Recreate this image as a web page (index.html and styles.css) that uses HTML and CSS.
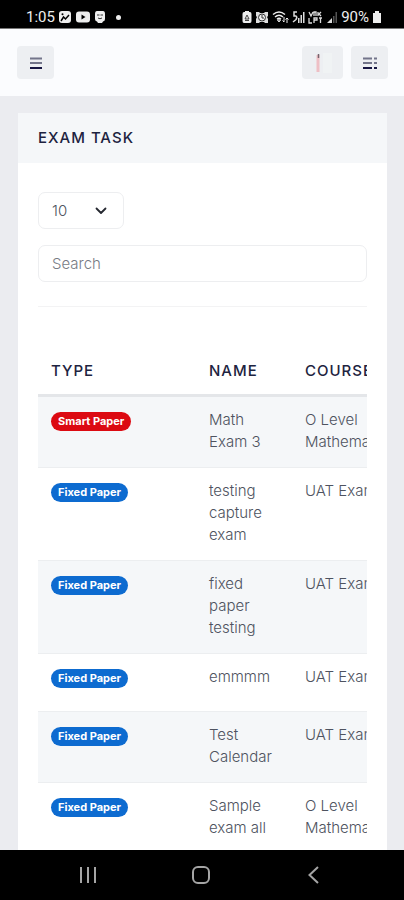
FILE: index.html
```html
<!DOCTYPE html>
<html lang="en">
<head>
<meta charset="utf-8">
<meta name="viewport" content="width=device-width, initial-scale=1">
<title>Exam Task</title>
<link rel="stylesheet" href="styles.css">
</head>
<body>
<div class="status">
  <div class="status-group">
    <span class="clock">1:05</span>
    <svg width="14" height="14" viewBox="0 0 14 14"><rect x="1" y="1" width="12" height="12" rx="3" fill="#eee"/><path d="M3 11l2.500-4 2 2 3.500-4" fill="none" stroke="#000" stroke-width="1.500"/><circle cx="4.500" cy="4.300" r="1" fill="#000"/></svg>
    <svg width="16" height="14" viewBox="0 0 16 14"><rect x="1" y="1.500" width="14" height="11" rx="3" fill="#eee"/><path d="M6.500 4.500v5l4-2.500z" fill="#000"/></svg>
    <svg width="12" height="14" viewBox="0 0 12 14"><path d="M3 1h6q2 0 2 3v5q0 2-2 2.500L8 13H4l-1-1.500Q1 11 1 9V4q0-3 2-3z" fill="#eee"/><path d="M3 5h2.500M6.500 5H9M4 8q2 1.500 4 0" fill="none" stroke="#333"/></svg>
    <span class="dot"></span>
  </div>
  <div class="status-group">
    <svg width="10" height="14" viewBox="0 0 10 14"><path d="M3 1h4v1h1q1.500 0 1.500 2v7q0 2-1.500 2H2q-1.500 0-1.500-2V4q0-2 1.500-2h1z" fill="#eee"/><path d="M3 9l2-4 2 4zM3 10.500h4" fill="none" stroke="#444"/></svg>
    <svg width="14" height="14" viewBox="0 0 14 14"><path d="M1 2h3l1 1h4l1-1h3v4l-1 1 1 2v4h-3l-1-1H5l-1 1H1V9l1-2-1-1z" fill="#ddd"/><circle cx="7" cy="7.500" r="3.500" fill="#eee" stroke="#333"/><path d="M7 5v3h2" fill="none" stroke="#333"/></svg>
    <svg width="17" height="14" viewBox="0 0 17 14"><path d="M1 4.500q6-5 12 0M3 7q4-3.500 8 0M5 9.300q2-1.800 4 0" fill="none" stroke="#eee" stroke-width="1.500"/><path d="M7 12l-1.500-2h3zM12 7v5M10.500 10.500l1.500 1.500M15 13V8M13.500 9.500L15 8l1.500 1.500" fill="none" stroke="#eee"/></svg>
    <svg width="13" height="14" viewBox="0 0 13 14"><path d="M5 2H2v4h2q1.500 1 0 3.500L1 12" fill="none" stroke="#ddd" stroke-width="1.500"/><path d="M6 13V8h1.500v5zM8.500 13V5H10v8zM11 13V2h1.500v11z" fill="#ddd"/></svg>
    <svg width="15" height="14" viewBox="0 0 15 14"><path d="M1 2l2 4 2-4M6 6V2h2v4M10 2v4M13 2l-2 2 2 2M1 8v5h3M6 13V8h3v2H6M11 8h3M12.500 8v5" fill="none" stroke="#ddd" stroke-width="1.300"/></svg>
    <svg width="12" height="14" viewBox="0 0 12 14"><path d="M1 13l5-5v5z" fill="#ddd"/><path d="M7 13V6h1.500v7zM9.500 13V2H11v11z" fill="#555"/></svg>
    <span class="battery">90%</span>
    <svg width="10" height="14" viewBox="0 0 10 14"><path d="M3 1h4v2h2v10H1V3h2z" fill="#eee"/></svg>
  </div>
</div>
<header class="topbar">
  <button class="tool" aria-label="Open menu"><svg width="14" height="14" viewBox="0 0 14 14"><path d="M1 2.500h12M1 7h12" stroke="#73758a" stroke-width="2"/><path d="M1 12h12" stroke="#171642" stroke-width="2"/></svg></button>
  <div class="tools">
    <button class="tool profile" aria-label="Profile"><svg width="18" height="20" viewBox="0 0 18 20"><rect x="9" width="9" height="20" fill="#f0f3f4"/><path d="M4 2v17" stroke="#eebfc5" stroke-width="3"/><path d="M4.500 1v4" stroke="#75656e" stroke-width="1.500"/></svg></button>
    <button class="tool" aria-label="Options"><svg width="16" height="14" viewBox="0 0 16 14"><path d="M1 2.500h9M12 2.500h3M1 7h9M12 7h3" stroke="#73758a" stroke-width="2"/><path d="M1 12h9M12 12h3" stroke="#171642" stroke-width="2"/></svg></button>
  </div>
</header>
<main class="content">
  <section class="card">
    <h1 class="card-title">EXAM TASK</h1>
    <div class="card-body">
      <div class="filters">
        <div class="select-wrap">
          <select class="field length" aria-label="Rows per page"><option>10</option><option>25</option><option>50</option></select>
          <svg class="chevron" width="12" height="8" viewBox="0 0 12 8"><path d="M1.500 1.500L6 6l4.500-4.500" fill="none" stroke="#252830" stroke-width="1.800" stroke-linecap="round" stroke-linejoin="round"/></svg>
        </div>
        <input class="field search" type="search" placeholder="Search" aria-label="Search">
      </div>
      <div class="table-wrap">
        <table>
          <colgroup><col class="col-type"><col class="col-name"><col class="col-course"></colgroup>
          <thead><tr><th>TYPE</th><th>NAME</th><th>COURSE</th></tr></thead>
          <tbody>
            <tr><td><span class="badge smart">Smart Paper</span></td><td>Math Exam 3</td><td>O Level<br>Mathematics</td></tr>
            <tr><td><span class="badge">Fixed Paper</span></td><td>testing capture exam</td><td>UAT Exam</td></tr>
            <tr><td><span class="badge">Fixed Paper</span></td><td>fixed paper testing</td><td>UAT Exam</td></tr>
            <tr><td><span class="badge">Fixed Paper</span></td><td>emmmm</td><td>UAT Exam</td></tr>
            <tr><td><span class="badge">Fixed Paper</span></td><td>Test Calendar</td><td>UAT Exam</td></tr>
            <tr><td><span class="badge">Fixed Paper</span></td><td>Sample exam all</td><td>O Level<br>Mathematics</td></tr>
          </tbody>
        </table>
      </div>
    </div>
  </section>
</main>
<nav class="sysnav" aria-label="System">
  <button aria-label="Recent apps"><svg width="20" height="20" viewBox="0 0 20 20"><path d="M3 2v16M10 2v16M17 2v16" stroke="#a5a5a5" stroke-width="2"/></svg></button>
  <button aria-label="Home"><svg width="20" height="20" viewBox="0 0 20 20"><rect x="2" y="2" width="16" height="16" rx="5" fill="none" stroke="#a5a5a5" stroke-width="2"/></svg></button>
  <button aria-label="Back"><svg width="20" height="20" viewBox="0 0 20 20"><path d="M14 2L5.500 10l8.500 8" fill="none" stroke="#a5a5a5" stroke-width="2"/></svg></button>
</nav>
</body>
</html>
```
FILE: styles.css
```css
* { box-sizing: border-box; }
body {
  margin: 0;
  height: 100vh;
  display: flex;
  flex-direction: column;
  overflow: hidden;
  background: #ebecf0;
  color: #4e5360;
  font: 300 15px/22px Inter, sans-serif;
}
button { border: 0; padding: 0; background: none; }
svg { display: block; flex: none; }

.status {
  flex: none;
  height: 29px;
  padding: 6px 22px 0 26px;
  display: flex;
  justify-content: space-between;
  align-items: flex-start;
  background: #000;
  border-bottom: 1px solid #777;
  color: #eee;
  font: 400 15px/22px Roboto, sans-serif;
}
.status-group { display: flex; align-items: center; gap: 3px; }
.dot { width: 5px; height: 5px; margin-left: 7px; border-radius: 50%; background: #eee; }

.topbar {
  flex: none;
  height: 67px;
  padding: 0 16px 0 17px;
  display: flex;
  align-items: center;
  justify-content: space-between;
  background: #fbfcfe;
}
.tools { display: flex; gap: 8px; }
.tool {
  width: 37px;
  height: 33px;
  display: grid;
  place-items: center;
  border-radius: 4px;
  background: #edeff2;
}
.profile { width: 41px; }

.content { flex: 1; min-height: 0; overflow: hidden; padding: 17px 17px 0 18px; }
.card { background: #fff; border-radius: 3px; }
.card-title {
  margin: 0;
  padding: 14px 20px;
  background: #f5f7f9;
  color: #1d2340;
  font-size: 15px;
  font-weight: 500;
  line-height: 22px;
  letter-spacing: 1px;
}
.card-body { padding: 29px 20px; }
.filters {
  display: flex;
  flex-direction: column;
  gap: 16px;
  padding-bottom: 24px;
  border-bottom: 1px solid #f3f3f4;
}
.field {
  width: 100%;
  height: 37px;
  margin: 0;
  padding: 0 13px;
  display: block;
  appearance: none;
  border: 1px solid #edeef0;
  border-radius: 7px;
  background: #fff;
  color: #4e5360;
  font: inherit;
}
.field::placeholder { color: #777b84; opacity: 1; }
.select-wrap { position: relative; width: 86px; }
.chevron { position: absolute; right: 17px; top: 15px; pointer-events: none; }

.table-wrap { margin-top: 40px; overflow: hidden; }
table { width: 460px; table-layout: fixed; border-collapse: separate; border-spacing: 0; }
.col-type { width: 158px; }
.col-name { width: 96px; }
th {
  padding: 13px 13px 12px;
  border-bottom: 3px solid #e4e6e9;
  color: #1d2340;
  font-weight: 500;
  letter-spacing: 1px;
  text-align: left;
}
td { height: 58px; padding: 12px 13px 14px; border-bottom: 1px solid #eceef0; vertical-align: top; }
tbody tr:nth-child(odd) { background: #f5f7f9; }
.badge {
  display: inline-block;
  margin-top: 3px;
  padding: 0 7px;
  border-radius: 10px;
  background: #0d6bd0;
  color: #fff;
  font-size: 11px;
  font-weight: 700;
  line-height: 19px;
  vertical-align: top;
}
.smart { background: #dc0a12; }

.sysnav {
  flex: none;
  height: 50px;
  padding: 0 33px 0 31px;
  display: flex;
  align-items: center;
  background: #000;
}
.sysnav button { flex: 1; height: 100%; display: grid; place-items: center; }
```
